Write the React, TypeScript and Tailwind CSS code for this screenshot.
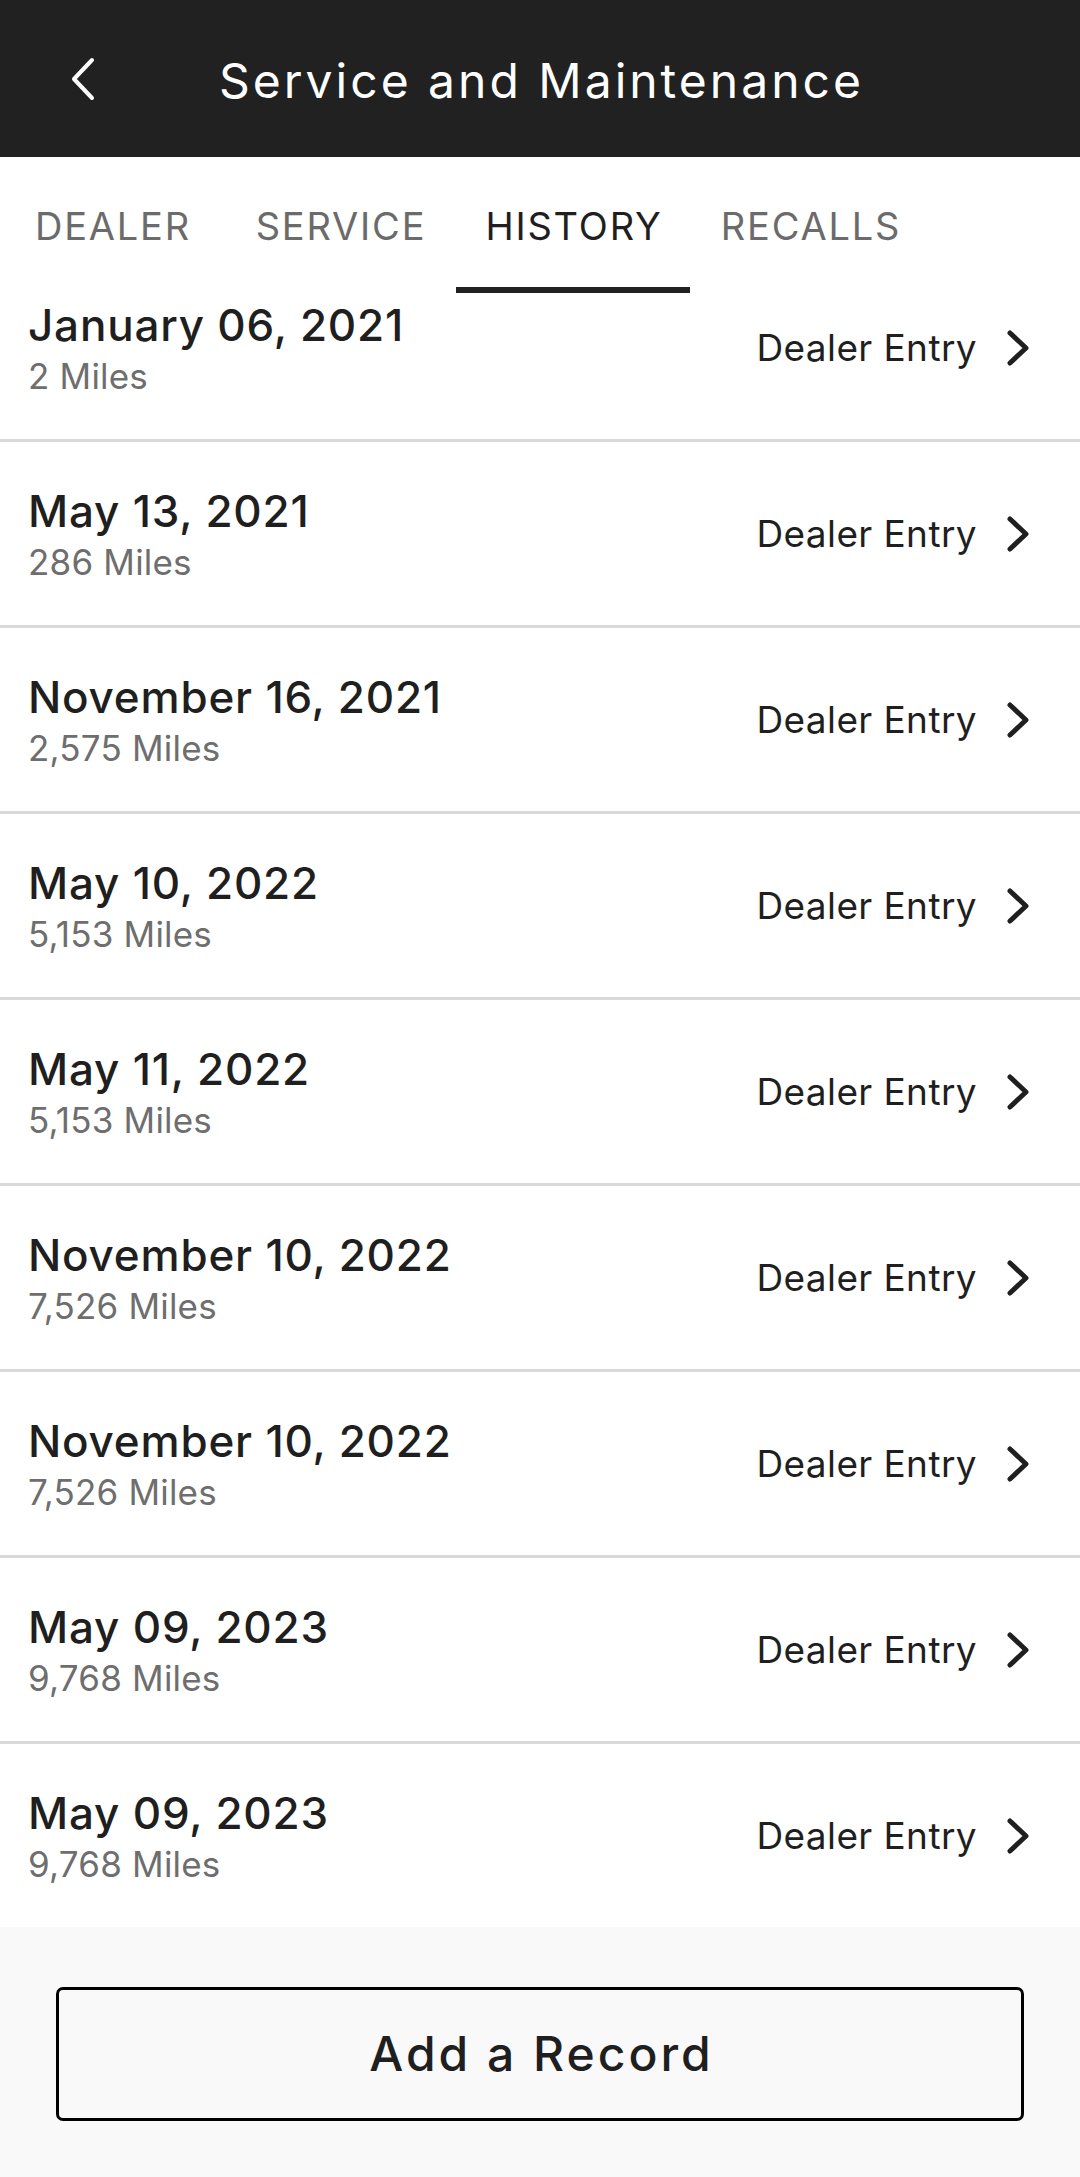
import { ReactNode } from 'react';

const font = { fontFamily: 'Inter, "Noto Sans", sans-serif' };

interface HistoryRecord {
  date: string;
  miles: string;
}

const records: HistoryRecord[] = [
  { date: 'January 06, 2021', miles: '2 Miles' },
  { date: 'May 13, 2021', miles: '286 Miles' },
  { date: 'November 16, 2021', miles: '2,575 Miles' },
  { date: 'May 10, 2022', miles: '5,153 Miles' },
  { date: 'May 11, 2022', miles: '5,153 Miles' },
  { date: 'November 10, 2022', miles: '7,526 Miles' },
  { date: 'November 10, 2022', miles: '7,526 Miles' },
  { date: 'May 09, 2023', miles: '9,768 Miles' },
  { date: 'May 09, 2023', miles: '9,768 Miles' },
];

const tabs = [
  { label: 'DEALER', width: 'w-[224px]' },
  { label: 'SERVICE', width: 'w-[232px]' },
  { label: 'HISTORY', width: 'w-[234px]', active: true },
  { label: 'RECALLS', width: 'w-[240px]' },
];

const Chevron = ({ className, children }: { className: string; children?: ReactNode }) => (
  <svg viewBox="0 0 24 38" className={className} fill="none" stroke="currentColor" strokeLinecap="round" strokeLinejoin="round">
    {children ?? <path d="M4 4 L20 19 L4 34" strokeWidth="5" />}
  </svg>
);

const HistoryRow = ({ record, last }: { record: HistoryRecord; last: boolean }) => (
  <div className={last ? 'h-[183px]' : 'h-[186px] border-b-[3px] border-[#d9d9d9]'}>
    <div className="flex h-[183px] items-center justify-between pl-[28px] pr-[50px]">
      <div className="flex flex-col pt-[4px]">
        <p className="text-[44px] font-medium leading-[52px] text-[#1f1f1f] tracking-[0.8px]">{record.date}</p>
        <p className="text-[35px] leading-[50px] text-[#6e6e6e] tracking-[0.2px]">{record.miles}</p>
      </div>
      <div className="flex items-center gap-[29px] text-[#1f1f1f]">
        <span className="text-[37px] leading-[44px] tracking-[0.4px]">Dealer Entry</span>
        <Chevron className="h-[38px] w-[24px]" />
      </div>
    </div>
  </div>
);

export default function App() {
  return (
    <div className="flex h-[2177px] w-[1080px] flex-col bg-white" style={font}>
      <header className="flex h-[157px] shrink-0 items-center bg-[#212121] text-white">
        <div className="flex w-[219px] justify-start pl-[70px]">
          <svg viewBox="0 0 26 44" className="h-[44px] w-[26px]" fill="none" stroke="currentColor" strokeLinecap="round" strokeLinejoin="round">
            <path d="M22 3 L4 22 L22 41" strokeWidth="4" />
          </svg>
        </div>
        <h1 className="pt-[4px] text-[48px] font-normal leading-none tracking-[3px]">Service and Maintenance</h1>
      </header>

      <nav className="flex h-[136px] shrink-0 bg-white">
        {tabs.map((tab) => (
          <div key={tab.label} className={`${tab.width} flex flex-col items-center`}>
            <div
              className={`flex flex-1 items-center pt-[8px] pl-[2px] text-[38px] tracking-[1.8px] ${
                tab.active ? 'text-[#1f1f1f]' : 'text-[#6b6b6b]'
              }`}
            >
              {tab.label}
            </div>
            <div className={`h-[6px] w-full ${tab.active ? 'bg-[#212121]' : 'bg-transparent'}`} />
          </div>
        ))}
      </nav>

      <div className="flex-1 overflow-hidden">
        <div className="-mt-[37px]">
          {records.map((r, i) => (
            <HistoryRow key={i} record={r} last={i === records.length - 1} />
          ))}
        </div>
      </div>

      <div className="flex h-[250px] shrink-0 items-start bg-[#f9f9f9] px-[56px] pt-[60px]">
        <button className="flex h-[134px] w-full items-center justify-center rounded-[7px] border-[3px] border-black pl-[3px] text-[48px] font-medium tracking-[3px] text-[#1f1f1f]">
          Add a Record
        </button>
      </div>
    </div>
  );
}
